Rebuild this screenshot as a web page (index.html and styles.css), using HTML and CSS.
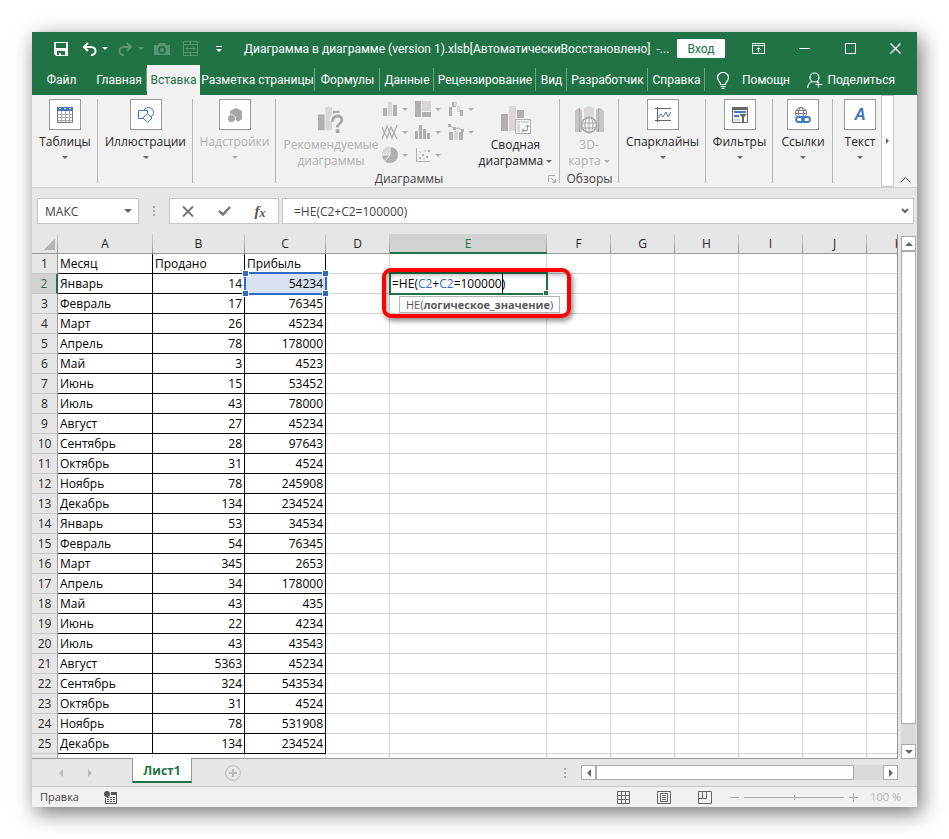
FILE: index.html
```
<!doctype html>
<html lang="ru">
<head>
    <meta charset="utf-8">
    <meta name="viewport" content="width=device-width, initial-scale=1">

    <title>Диаграмма в диаграмме (version 1).xlsb</title>

    <link rel="stylesheet" href="styles.css">
</head>
<body>
    <main class="window">
        <header class="titlebar">
            <div class="quick">
                <button class="icon-button save" aria-label="Сохранить"><svg width="14" height="14" viewBox="0 0 14 14"><path fill="#fff" fill-rule="evenodd" d="M0 0h14v14H2l-2-2zM2 1h10v5H2zM3 9h8v4H7v-2H5v2H3z"/></svg></button>
                <button class="icon-button undo" aria-label="Отменить"><svg width="15" height="14" viewBox="0 0 15 14"><path fill="none" stroke="#fff" stroke-width="2" d="M6 1 2 5l4 4M2 5h7c6 0 6 8 0 8"/></svg></button>
                <button class="icon-button undo-more" aria-label="Список отмены"><i class="caret caret-white"></i></button>
                <button class="icon-button faded redo" aria-label="Вернуть"><svg width="15" height="14" viewBox="0 0 15 14"><path fill="none" stroke="#fff" stroke-width="2" d="m9 1 4 4-4 4m4-4H6c-6 0-6 8 0 8"/></svg></button>
                <button class="icon-button faded redo-more" aria-label="Список возврата"><i class="caret caret-white"></i></button>
                <button class="icon-button faded camera" aria-label="Камера"><svg width="16" height="12" viewBox="0 0 16 12"><path fill="#fff" fill-rule="evenodd" d="M0 2h4l1-2h6l1 2h4v10H0zM8 3a4 4 0 1 0 0 8 4 4 0 0 0 0-8zM8 5a2 2 0 1 1 0 4 2 2 0 0 1 0-4z"/></svg></button>
                <button class="icon-button faded fit" aria-label="Ширина"><svg width="15" height="15" viewBox="0 0 15 15"><path fill="none" stroke="#fff" d="M.5.5h14v14H.5zM.5 3.500h14M.5 11.500h14M7.500.5v3M7.500 11.500v3M3 7.500h9M5 5.500l-2 2 2 2M10 5.500l2 2-2 2"/></svg></button>
                <button class="icon-button customize" aria-label="Настройка панели"><svg width="6" height="6" viewBox="0 0 6 6"><path fill="#fff" d="M0 0h6v1H0zM0 3h6L3 6z"/></svg></button>
            </div>
            <h1 class="title">Диаграмма в диаграмме (version 1).xlsb[АвтоматическиВосстановлено]&nbsp; -...</h1>
            <button class="login">Вход</button>
            <div class="window-buttons">
                <button class="icon-button" aria-label="Параметры ленты"><svg width="13" height="11" viewBox="0 0 13 11"><path fill="none" stroke="#fff" d="M.5.5h12v10H.5zM.5 2.500h12M6.500 9V4.500M4.500 6.500l2-2 2 2"/></svg></button>
                <button class="icon-button" aria-label="Свернуть"><svg width="11" height="11" viewBox="0 0 11 11"><path stroke="#fff" d="M0 5.500h11"/></svg></button>
                <button class="icon-button" aria-label="Развернуть"><svg width="11" height="11" viewBox="0 0 11 11"><path fill="none" stroke="#fff" d="M.5.5h10v10H.5z"/></svg></button>
                <button class="icon-button" aria-label="Закрыть"><svg width="11" height="11" viewBox="0 0 11 11"><path stroke="#fff" stroke-width="1.300" d="m.5.5 10 10m0-10-10 10"/></svg></button>
            </div>
        </header>

        <nav class="tabs">
            <button class="tab tab-file">Файл</button>
            <button class="tab tab-home">Главная</button>
            <button class="tab tab-insert active">Вставка</button>
            <button class="tab tab-layout">Разметка страницы</button>
            <button class="tab tab-formulas">Формулы</button>
            <button class="tab tab-data">Данные</button>
            <button class="tab tab-review">Рецензирование</button>
            <button class="tab tab-view">Вид</button>
            <button class="tab tab-dev">Разработчик</button>
            <button class="tab tab-help">Справка</button>
            <button class="tell-me"><svg width="12" height="17" viewBox="0 0 12 17"><path fill="none" stroke="#fff" stroke-width="1.200" d="M3.500 12.500c0-3-3-3.500-3-7a5.500 5 0 0 1 11 0c0 3.500-3 4-3 7zM3.500 14.500h5M4.500 16.300h3"/></svg>Помощн</button>
            <button class="share"><svg width="16" height="17" viewBox="0 0 16 17"><path fill="none" stroke="#fff" stroke-width="1.200" d="M7.500 1a4.500 4.500 0 1 0 0 9 4.500 4.500 0 0 0 0-9zM.7 16c0-4 2-5.500 4.500-6.500M9.500 9.500l1.500 1.300M11.500 9.500v6M8.500 12.500h7"/></svg>Поделиться</button>
        </nav>

        <section class="ribbon">
            <div class="group group-tables">
                <button class="tool"><span class="tile"><svg width="16" height="16" viewBox="0 0 16 16"><path fill="#4178be" d="M0 0h16v4H0z"/><path fill="#fff" d="M2 1h2v1H2zM7 1h2v1H7zM12 1h2v1h-2z"/><path fill="none" stroke="#aaa" d="M.5 7.500h15M.5 10.500h15M.5 13.500h15M4.500 4v12M8.500 4v12M12.500 4v12"/><path fill="none" stroke="#777" d="M.5 4v11.500h15V4"/></svg></span>Таблицы<i class="caret"></i></button>
            </div>
            <div class="group group-pictures">
                <button class="tool"><span class="tile"><svg width="16" height="16" viewBox="0 0 16 16"><g fill="#fff" stroke="#3e78bd"><circle cx="10.500" cy="5.500" r="5"/><path d="M.5 3.500h9v8h-9z"/><path d="m9.500 6.500 4.500 4.500-4.500 4.500L5 11z"/></g></svg></span>Иллюстрации<i class="caret"></i></button>
            </div>
            <div class="group group-addins">
                <button class="tool" disabled><span class="tile"><svg width="14" height="14" viewBox="0 0 14 14"><path fill="#a6a6a6" d="m8 0 6 3v8l-4 3-2-2V9L4 6 2 7V3z"/><circle cx="3.500" cy="10.500" r="3.500" fill="#a6a6a6"/></svg></span>Надстройки<i class="caret"></i></button>
            </div>
            <div class="group group-charts">
                <div class="group-tools">
                    <button class="big-tool recommended" disabled><svg width="30" height="30" viewBox="0 0 30 30"><path fill="#b1afb1" d="M0 9h7v17H0zM16 5h7v8h-7z"/><path fill="#d9d5d9" d="M8 1h7v25H8z"/><path fill="none" stroke="#f1f1f1" stroke-width="6" d="M15 16c0-7 11-7 11-1 0 4-5 4-5 8"/><path fill="none" stroke="#a6a6a6" stroke-width="3" d="M15.500 17c0-8 10-8 10-2 0 4-5 4-5 8"/><path fill="#a6a6a6" d="M19 25h4v4h-4z"/></svg>Рекомендуемые<br>диаграммы</button>
                    <div class="chart-grid">
                        <button class="mini" disabled aria-label="Гистограмма"><svg width="16" height="16" viewBox="0 0 16 16"><path fill="#b1afb1" d="M1 7h4v8H1zM11 4h4v11h-4z"/><path fill="#d9d5d9" d="M6 1h4v14H6z"/></svg><i class="caret"></i></button>
                        <button class="mini" disabled aria-label="Иерархическая"><svg width="16" height="16" viewBox="0 0 16 16"><path fill="#b1afb1" d="M0 0h6v16H0zM7 11h9v5H7z"/><path fill="#d9d5d9" d="M7 0h9v10H7z"/></svg><i class="caret"></i></button>
                        <button class="mini" disabled aria-label="Каскадная"><svg width="16" height="16" viewBox="0 0 16 16"><path fill="#b1afb1" d="M1 6h3v9H1zM4 1h4v5H4zM12 9h3v6h-3z"/><path fill="#d9d5d9" d="M6 1h3v4H6zM9 5h3v6H9z"/></svg><i class="caret"></i></button>
                        <button class="mini" disabled aria-label="График"><svg width="16" height="16" viewBox="0 0 16 16"><g fill="none" stroke="#b1afb1" stroke-width="1.300"><path d="m0 15 5-13 5 12 5-13"/><path d="m0 3 5 11 4-11 6 12"/></g></svg><i class="caret"></i></button>
                        <button class="mini" disabled aria-label="Статистическая"><svg width="16" height="16" viewBox="0 0 16 16"><path fill="#b1afb1" d="M0 7h3v8H0zM4 1h3v14H4zM8 5h3v10H8zM12 9h3v6h-3z"/></svg><i class="caret"></i></button>
                        <button class="mini" disabled aria-label="Комбинированная"><svg width="16" height="16" viewBox="0 0 16 16"><path fill="#b1afb1" d="M1 8h4v8H1zM11 8h4v8h-4z"/><path fill="#d9d5d9" d="M6 7h4v9H6z"/><path fill="none" stroke="#b1afb1" d="m1 1 6 4 3-1 5 3"/><path fill="#b1afb1" d="M0 0h3v3H0zM5 3h3v3H5zM13 5h3v3h-3z"/></svg><i class="caret"></i></button>
                        <button class="mini" disabled aria-label="Круговая"><svg width="16" height="16" viewBox="0 0 16 16"><circle cx="8" cy="8" r="8" fill="#b1afb1"/><path fill="#d9d5d9" d="M8 8H0a8 8 0 0 1 8-8z"/><path fill="none" stroke="#f1f1f1" d="M0 8h8V0M8 8l-5 6"/></svg><i class="caret"></i></button>
                        <button class="mini" disabled aria-label="Точечная"><svg width="16" height="16" viewBox="0 0 16 16"><path fill="none" stroke="#b1afb1" d="M1.500 1v13.500H15"/><path fill="#b1afb1" d="M4 10h2v2H4zM7 7h2v2H7zM11 9h2v2h-2zM13 3h2v2h-2z"/><path fill="#d9d5d9" d="M4 4h2v2H4zM9 3h2v2H9zM8 11h2v2H8z"/></svg><i class="caret"></i></button>
                    </div>
                    <button class="big-tool pivot"><svg width="30" height="30" viewBox="0 0 30 30"><path fill="#b1afb1" d="M0 9h7v17H0zM16 5h7v8h-7z"/><path fill="#d9d5d9" d="M8 1h7v25H8z"/><path fill="#f5f5f5" stroke="#b1afb1" d="M14.500 14.500h15v14h-15z"/><path fill="#d9d5d9" d="M16 16h3v2h-3zM20 16h8v2h-8zM16 19h3v8h-3z"/><path fill="none" stroke="#999" d="M26.500 20v5.500H21M24.500 22l2-2 2 2M23 23.500l-2 2 2 2"/></svg>Сводная<br>диаграмма <i class="caret"></i></button>
                </div>
                <div class="group-label">Диаграммы</div>
                <button class="launcher" aria-label="Все диаграммы"><svg width="8" height="8" viewBox="0 0 8 8"><path fill="none" stroke="#aaa" d="M.5 7V.5H7M3 3l4 4M7.500 4v3.500H4"/></svg></button>
            </div>
            <div class="group group-tours">
                <div class="group-tools">
                    <button class="big-tool map" disabled><svg width="30" height="30" viewBox="0 0 30 30"><path fill="#c6c4c6" d="m1 6 3-3 4 2v22H1zM22 5l4-2 4 3v21h-8z"/><path fill="#a9a7a9" d="M5 3h1v24H5zM24 3h1v24h-1z"/><path fill="#d9d5d9" d="m10 3 5-2 5 2v24H10z"/><circle cx="15" cy="20" r="7.500" fill="#f3f3f3" stroke="#a9a7a9" stroke-width="1.500"/><path fill="none" stroke="#a9a7a9" d="M8 18h14M8 23h14M15 12v16"/><ellipse cx="15" cy="20" rx="4" ry="8" fill="none" stroke="#a9a7a9"/></svg>3D-<br>карта <i class="caret"></i></button>
                </div>
                <div class="group-label">Обзоры</div>
            </div>
            <div class="group group-sparklines">
                <button class="tool"><span class="tile"><svg width="16" height="16" viewBox="0 0 16 16"><path fill="none" stroke="#666" d="M0 1.500h16M0 13.500h16M2.500 0v15"/><path fill="none" stroke="#3e78bd" d="m3 11 3-4 2 3 3-5 2 5 3-5"/></svg></span>Спарклайны<i class="caret"></i></button>
            </div>
            <div class="group group-filters">
                <button class="tool"><span class="tile"><svg width="16" height="16" viewBox="0 0 16 16"><path fill="#fff" stroke="#666" d="M.5.5h15v15H.5z"/><path fill="#666" d="M0 0h16v3H0z"/><path fill="#3e78bd" d="M2 4h12v2H2zM2 8h5v2H2z"/><path fill="#c9daef" d="M2 12h6v2H2z"/><path fill="#666" d="M7 7h8l-3 3v5h-2v-5z"/></svg></span>Фильтры<i class="caret"></i></button>
            </div>
            <div class="group group-links">
                <button class="tool"><span class="tile"><svg width="16" height="16" viewBox="0 0 16 16"><g fill="none" stroke="#777"><circle cx="6" cy="6" r="5.500"/><ellipse cx="6" cy="6" rx="2.500" ry="5.500"/><path d="M1 3.500h10M0 6.500h12"/></g><path fill="#fff" d="M0 9h16v7H0z"/><g fill="none" stroke="#3e78bd" stroke-width="1.800"><rect x="1" y="10" width="8" height="5" rx="2.500"/><rect x="7" y="10" width="8" height="5" rx="2.500"/></g></svg></span>Ссылки<i class="caret"></i></button>
            </div>
            <div class="group group-text">
                <button class="tool"><span class="tile letter">A</span>Текст<i class="caret"></i></button>
            </div>
            <button class="ribbon-next" aria-label="Далее"><i class="arrow-right"></i></button>
            <button class="ribbon-collapse" aria-label="Свернуть ленту"><svg width="11" height="6" viewBox="0 0 11 6"><path fill="none" stroke="#444" d="m.5 5.500 5-5 5 5"/></svg></button>
        </section>

        <section class="formula-bar">
            <div class="name-box">
                <input class="name-input" type="text" value="МАКС" aria-label="Имя ячейки">
                <button class="name-more" aria-label="Список имён"><i class="caret caret-large"></i></button>
            </div>
            <span class="dots"></span>
            <div class="formula-buttons">
                <button class="icon-button" aria-label="Отмена"><svg width="12" height="11" viewBox="0 0 12 11"><path stroke="#777" stroke-width="2" d="m1 .5 10 10m0-10-10 10"/></svg></button>
                <button class="icon-button" aria-label="Ввод"><svg width="13" height="10" viewBox="0 0 13 10"><path fill="none" stroke="#777" stroke-width="2.500" d="m1 5 4 3.500L12 1"/></svg></button>
                <button class="icon-button fx" aria-label="Вставить функцию">f<span class="fx-x">x</span></button>
            </div>
            <div class="formula-field">
                <input class="formula-input" type="text" value="=НЕ(C2+C2=100000)" aria-label="Строка формул">
                <button class="icon-button expand" aria-label="Развернуть строку формул"><svg width="8" height="6" viewBox="0 0 8 6"><path fill="none" stroke="#666" stroke-width="2" d="m1 1 3 3 3-3"/></svg></button>
            </div>
        </section>

        <section class="workspace">
            <div class="sheet">
                <table class="grid">
                    <colgroup>
                        <col class="col-row"><col class="col-a"><col class="col-b"><col class="col-c"><col class="col-std"><col class="col-e"><col class="col-std"><col class="col-std"><col class="col-std"><col class="col-std"><col class="col-std"><col>
                    </colgroup>
                    <thead>
                        <tr><th class="corner"></th><th>A</th><th>B</th><th>C</th><th>D</th><th class="current">E</th><th>F</th><th>G</th><th>H</th><th>I</th><th>J</th><th>K</th></tr>
                    </thead>
                    <tbody>
                        <tr><th>1</th><td class="data">Месяц</td><td class="data">Продано</td><td class="data">Прибыль</td><td></td><td></td><td></td><td></td><td></td><td></td><td></td><td></td></tr>
                        <tr>
                            <th class="current">2</th><td class="data">Январь</td><td class="data num">14</td>
                            <td class="data num referenced">54234<span class="reference"><i class="handle top left"></i><i class="handle top right"></i><i class="handle bottom left"></i><i class="handle bottom right"></i></span></td>
                            <td></td>
                            <td class="editing">
                                <span class="editor">=НЕ(<span class="ref">C2</span>+<span class="ref">C2</span>=100000<span class="cursor"></span>)</span>
                                <span class="hint">НЕ(<b>логическое_значение</b>)</span>
                                <span class="marker"></span>
                            </td>
                            <td></td><td></td><td></td><td></td><td></td><td></td>
                        </tr>
                        <tr><th>3</th><td class="data">Февраль</td><td class="data num">17</td><td class="data num">76345</td><td></td><td></td><td></td><td></td><td></td><td></td><td></td><td></td></tr>
                        <tr><th>4</th><td class="data">Март</td><td class="data num">26</td><td class="data num">45234</td><td></td><td></td><td></td><td></td><td></td><td></td><td></td><td></td></tr>
                        <tr><th>5</th><td class="data">Апрель</td><td class="data num">78</td><td class="data num">178000</td><td></td><td></td><td></td><td></td><td></td><td></td><td></td><td></td></tr>
                        <tr><th>6</th><td class="data">Май</td><td class="data num">3</td><td class="data num">4523</td><td></td><td></td><td></td><td></td><td></td><td></td><td></td><td></td></tr>
                        <tr><th>7</th><td class="data">Июнь</td><td class="data num">15</td><td class="data num">53452</td><td></td><td></td><td></td><td></td><td></td><td></td><td></td><td></td></tr>
                        <tr><th>8</th><td class="data">Июль</td><td class="data num">43</td><td class="data num">78000</td><td></td><td></td><td></td><td></td><td></td><td></td><td></td><td></td></tr>
                        <tr><th>9</th><td class="data">Август</td><td class="data num">27</td><td class="data num">45234</td><td></td><td></td><td></td><td></td><td></td><td></td><td></td><td></td></tr>
                        <tr><th>10</th><td class="data">Сентябрь</td><td class="data num">28</td><td class="data num">97643</td><td></td><td></td><td></td><td></td><td></td><td></td><td></td><td></td></tr>
                        <tr><th>11</th><td class="data">Октябрь</td><td class="data num">31</td><td class="data num">4524</td><td></td><td></td><td></td><td></td><td></td><td></td><td></td><td></td></tr>
                        <tr><th>12</th><td class="data">Ноябрь</td><td class="data num">78</td><td class="data num">245908</td><td></td><td></td><td></td><td></td><td></td><td></td><td></td><td></td></tr>
                        <tr><th>13</th><td class="data">Декабрь</td><td class="data num">134</td><td class="data num">234524</td><td></td><td></td><td></td><td></td><td></td><td></td><td></td><td></td></tr>
                        <tr><th>14</th><td class="data">Январь</td><td class="data num">53</td><td class="data num">34534</td><td></td><td></td><td></td><td></td><td></td><td></td><td></td><td></td></tr>
                        <tr><th>15</th><td class="data">Февраль</td><td class="data num">54</td><td class="data num">76345</td><td></td><td></td><td></td><td></td><td></td><td></td><td></td><td></td></tr>
                        <tr><th>16</th><td class="data">Март</td><td class="data num">345</td><td class="data num">2653</td><td></td><td></td><td></td><td></td><td></td><td></td><td></td><td></td></tr>
                        <tr><th>17</th><td class="data">Апрель</td><td class="data num">34</td><td class="data num">178000</td><td></td><td></td><td></td><td></td><td></td><td></td><td></td><td></td></tr>
                        <tr><th>18</th><td class="data">Май</td><td class="data num">43</td><td class="data num">435</td><td></td><td></td><td></td><td></td><td></td><td></td><td></td><td></td></tr>
                        <tr><th>19</th><td class="data">Июнь</td><td class="data num">22</td><td class="data num">4234</td><td></td><td></td><td></td><td></td><td></td><td></td><td></td><td></td></tr>
                        <tr><th>20</th><td class="data">Июль</td><td class="data num">43</td><td class="data num">43543</td><td></td><td></td><td></td><td></td><td></td><td></td><td></td><td></td></tr>
                        <tr><th>21</th><td class="data">Август</td><td class="data num">5363</td><td class="data num">45234</td><td></td><td></td><td></td><td></td><td></td><td></td><td></td><td></td></tr>
                        <tr><th>22</th><td class="data">Сентябрь</td><td class="data num">324</td><td class="data num">543534</td><td></td><td></td><td></td><td></td><td></td><td></td><td></td><td></td></tr>
                        <tr><th>23</th><td class="data">Октябрь</td><td class="data num">31</td><td class="data num">4524</td><td></td><td></td><td></td><td></td><td></td><td></td><td></td><td></td></tr>
                        <tr><th>24</th><td class="data">Ноябрь</td><td class="data num">78</td><td class="data num">531908</td><td></td><td></td><td></td><td></td><td></td><td></td><td></td><td></td></tr>
                        <tr><th>25</th><td class="data">Декабрь</td><td class="data num">134</td><td class="data num">234524</td><td></td><td></td><td></td><td></td><td></td><td></td><td></td><td></td></tr>
                        <tr class="partial"><th></th><td></td><td></td><td></td><td></td><td></td><td></td><td></td><td></td><td></td><td></td><td></td></tr>
                    </tbody>
                </table>
            </div>
            <div class="scroll-v">
                <button class="scroll-button" aria-label="Вверх"><i class="arrow-up"></i></button>
                <div class="thumb"></div>
                <button class="scroll-button" aria-label="Вниз"><i class="caret caret-large"></i></button>
            </div>
        </section>

        <section class="sheet-bar">
            <div class="sheet-nav">
                <button class="icon-button" aria-label="Предыдущий лист"><i class="arrow-left pale"></i></button>
                <button class="icon-button" aria-label="Следующий лист"><i class="arrow-right pale"></i></button>
            </div>
            <button class="sheet-tab">Лист1</button>
            <button class="icon-button add-sheet" aria-label="Новый лист"><svg width="16" height="16" viewBox="0 0 16 16"><circle cx="8" cy="8" r="7.400" fill="none" stroke="#bbb"/><path stroke="#bbb" stroke-width="2" d="M4 8h8M8 4v8"/></svg></button>
            <span class="dots"></span>
            <div class="scroll-h">
                <button class="scroll-button" aria-label="Влево"><i class="arrow-left"></i></button>
                <div class="thumb"></div>
                <button class="scroll-button" aria-label="Вправо"><i class="arrow-right"></i></button>
            </div>
        </section>

        <footer class="status">
            <span class="mode">Правка</span>
            <button class="icon-button" aria-label="Запись макроса"><svg width="13" height="13" viewBox="0 0 13 13"><circle cx="3" cy="3" r="3" fill="#555"/><path fill="#555" d="M7 1h6v3H7z"/><path fill="none" stroke="#555" d="M1.500 7v5.500h11V4"/><path fill="#555" d="M3 6h2v1H3zM6 6h2v1H6zM9 6h2v1H9zM3 8h2v1H3zM6 8h2v1H6zM9 8h2v1H9zM3 10h2v1H3zM6 10h2v1H6zM9 10h2v1H9z"/></svg></button>
            <div class="views">
                <button class="icon-button" aria-label="Обычный"><svg width="13" height="13" viewBox="0 0 13 13"><path fill="none" stroke="#666" d="M.5.5h12v12H.5zM4.500 0v13M8.500 0v13M0 4.500h13M0 8.500h13"/></svg></button>
                <button class="icon-button" aria-label="Разметка страницы"><svg width="14" height="13" viewBox="0 0 14 13"><path fill="none" stroke="#666" d="M.5.5h13v12H.5zM3.500 2.500h7v8h-7zM5 4.500h4M5 6.500h4M5 8.500h4"/></svg></button>
                <button class="icon-button" aria-label="Страничный режим"><svg width="14" height="13" viewBox="0 0 14 13"><path fill="none" stroke="#666" d="M.5.5h13v12H.5zM4.500 0v7.500M.5 7.500h8V0"/></svg></button>
            </div>
            <div class="zoom">
                <button class="icon-button" aria-label="Уменьшить"><svg width="9" height="9" viewBox="0 0 9 9"><path stroke="#aaa" d="M0 4.500h9"/></svg></button>
                <input class="zoom-range" type="range" min="10" max="190" value="100" aria-label="Масштаб">
                <button class="icon-button" aria-label="Увеличить"><svg width="9" height="9" viewBox="0 0 9 9"><path stroke="#aaa" d="M0 4.500h9M4.500 0v9"/></svg></button>
                <span class="zoom-value">100 %</span>
            </div>
        </footer>
    </main>
</body>
</html>
```
FILE: styles.css
```
*,
*::before,
*::after {
    box-sizing: border-box;
}

body {
    background-color: white;
    color: #262626;
    font-family: "Open Sans", "Noto Sans", sans-serif;
    font-size: 12px;
    line-height: 16px;
    margin: 0;
    padding: 32px;
}

button,
input {
    background: none;
    border: 0;
    color: inherit;
    font: inherit;
    margin: 0;
    padding: 0;
}

svg {
    display: block;
}

.window {
    background-color: #e6e6e6;
    box-shadow: 4px 6px 20px rgba(0, 0, 0, 0.55);
}

.icon-button {
    align-items: center;
    display: flex;
    flex: none;
    justify-content: center;
}

.faded {
    opacity: 0.25;
}

/*
 * Arrows
 */

.caret {
    border: 3px solid transparent;
    border-bottom: 0;
    border-top-color: #666;
    display: inline-block;
    height: 3px;
    width: 6px;
}

.caret-white {
    border-top-color: white;
}

.caret-large {
    border-width: 4px;
    border-bottom: 0;
    height: 4px;
    width: 8px;
}

.arrow-up {
    border: 4px solid transparent;
    border-bottom-color: #666;
    border-top: 0;
}

.arrow-left {
    border: 4px solid transparent;
    border-left: 0;
    border-right-color: #666;
}

.arrow-right {
    border: 4px solid transparent;
    border-left-color: #666;
    border-right: 0;
}

.arrow-left.pale {
    border-right-color: #bbb;
}

.arrow-right.pale {
    border-left-color: #bbb;
}

/*
 * Title bar and tabs
 */

.titlebar,
.tabs {
    background-color: #217346;
    color: white;
    display: flex;
    font-family: Roboto, "Open Sans", sans-serif;
    white-space: nowrap;
}

.titlebar {
    align-items: center;
    height: 33px;
}

.quick {
    align-items: center;
    display: flex;
    flex: none;
    padding-left: 22px;
    width: 212px;
}

.save {
    margin-right: 14px;
}

.undo,
.redo {
    margin-right: 5px;
}

.undo-more {
    margin-right: 10px;
}

.redo-more {
    margin-right: 10px;
}

.camera {
    margin-right: 13px;
}

.customize {
    margin-left: 18px;
}

.title {
    flex: 1;
    font-size: 12px;
    font-weight: normal;
    margin: 0;
}

.login {
    background-color: white;
    border-radius: 1px;
    color: #217346;
    height: 19px;
    width: 48px;
}

.window-buttons {
    display: flex;
    margin-left: 9px;
}

.window-buttons .icon-button {
    height: 28px;
    padding-left: 2px;
    width: 46px;
}

.window-buttons .icon-button:last-child {
    width: 45px;
}

.tabs {
    height: 30px;
}

.tab {
    background: linear-gradient(#6fa587, #6fa587) right 3px / 1px 23px no-repeat;
    flex: none;
    text-align: center;
}

.tab-file {
    background: none;
    width: 59px;
}

.tab-home {
    width: 56px;
}

.tab-insert {
    width: 53px;
}

.tab-layout {
    width: 115px;
}

.tab-formulas {
    width: 65px;
}

.tab-data {
    width: 54px;
}

.tab-review {
    width: 102px;
}

.tab-view {
    width: 31px;
}

.tab-dev {
    width: 81px;
}

.tab-help {
    width: 57px;
}

.tab.active {
    background: #f1f1f1;
    color: #217346;
}

.tell-me,
.share {
    align-items: center;
    display: flex;
    flex: none;
}

.tell-me {
    gap: 13px;
    margin-left: 12px;
}

.share {
    gap: 4px;
    margin-left: auto;
    margin-right: 22px;
}

/*
 * Ribbon
 */

.ribbon {
    background-color: #f1f1f1;
    border-bottom: 1px solid #d2d2d2;
    display: flex;
    height: 93px;
}

.group {
    background: linear-gradient(#b5b5b5, #b5b5b5) right 4px / 1px 84px no-repeat;
    flex: none;
    padding-top: 4px;
    position: relative;
    white-space: nowrap;
}

.group-tables {
    width: 66px;
}

.group-pictures {
    width: 95px;
}

.group-addins {
    width: 83px;
}

.group-charts {
    width: 284px;
}

.group-tours {
    width: 59px;
}

.group-sparklines {
    width: 87px;
}

.group-filters {
    width: 67px;
}

.group-links {
    width: 60px;
}

.group-text {
    background: none;
    flex: 1 0 48px;
    padding-left: 6px;
}

.tool {
    align-items: center;
    display: flex;
    flex-direction: column;
    width: 100%;
}

.tool:disabled,
.big-tool:disabled {
    color: #b1b1b1;
}

:disabled .caret {
    border-top-color: #b1b1b1;
}

.tile {
    align-items: center;
    background-color: white;
    border: 1px solid #999;
    display: flex;
    height: 31px;
    justify-content: center;
    margin-bottom: 4px;
    width: 32px;
}

.tool .caret {
    margin-top: 6px;
}

.letter {
    color: #3e78bd;
    font-family: "Liberation Sans", sans-serif;
    font-size: 16px;
    font-style: italic;
    font-weight: bold;
}

.group-tools {
    display: flex;
    height: 72px;
}

.group-charts .group-tools {
    padding-left: 6px;
}

.big-tool {
    flex: none;
    padding-top: 4px;
}

.big-tool svg {
    margin: 0 auto 2px;
}

.big-tool .caret {
    vertical-align: 2px;
}

.recommended {
    width: 98px;
}

.recommended svg {
    padding-left: 2px;
}

.pivot {
    width: 77px;
}

.map {
    width: 58px;
}

.chart-grid {
    align-content: start;
    display: grid;
    flex: none;
    grid-auto-rows: 23px;
    grid-template-columns: 33px 33px 29px;
    padding-left: 2px;
    width: 97px;
}

.mini {
    align-items: center;
    display: flex;
    gap: 4px;
    height: 20px;
}

.group-label {
    color: #444;
    text-align: center;
}

.group-charts .group-label {
    padding-right: 18px;
}

.launcher {
    bottom: 4px;
    position: absolute;
    right: 4px;
}

.ribbon-next {
    align-items: center;
    background-color: white;
    border: 1px solid #c6c6c6;
    display: flex;
    flex: none;
    justify-content: center;
    width: 13px;
}

.ribbon-next .arrow-right {
    border-width: 3px;
    border-right: 0;
}

.ribbon-collapse {
    align-self: flex-end;
    flex: none;
    padding: 4px 6px;
    width: 23px;
}

/*
 * Formula bar
 */

.formula-bar {
    color: #444;
    display: flex;
    height: 46px;
    padding: 10px 3px 10px 5px;
}

.name-box,
.formula-buttons,
.formula-field {
    background-color: white;
    border: 1px solid #c6c6c6;
    display: flex;
}

.name-box {
    flex: none;
    width: 102px;
}

.name-input {
    min-width: 0;
    padding-left: 7px;
    padding-top: 1px;
    width: 80px;
}

.name-more {
    align-items: center;
    display: flex;
    flex: 1;
    justify-content: center;
}

.dots {
    align-self: center;
    background: linear-gradient(#aaa 2px, transparent 2px) 0 0 / 2px 4px;
    flex: none;
    height: 10px;
    width: 2px;
}

.formula-bar .dots {
    margin: 0 14px;
}

.formula-buttons {
    flex: none;
    width: 110px;
}

.formula-buttons .icon-button {
    flex: 1;
}

.fx {
    color: #555;
    font-family: "Liberation Serif", serif;
    font-size: 15px;
    font-style: italic;
    font-weight: bold;
}

.fx-x {
    font-size: 12px;
    padding-top: 3px;
}

.formula-field {
    flex: 1;
    margin-left: 3px;
}

.formula-input {
    flex: 1;
    min-width: 0;
    padding-left: 11px;
    padding-top: 1px;
}

.expand {
    width: 16px;
}

/*
 * Sheet
 */

.workspace {
    display: flex;
}

.sheet {
    background-color: white;
    border-bottom: 1px solid #999;
    border-right: 1px solid #999;
    flex: 1;
    min-width: 0;
    overflow: hidden;
}

.grid {
    border-collapse: separate;
    border-spacing: 0;
    color: black;
    min-width: 899px;
    table-layout: fixed;
    width: 100%;
}

.col-row {
    width: 26px;
}

.col-a {
    width: 95px;
}

.col-b {
    width: 92px;
}

.col-c {
    width: 81px;
}

.col-std {
    width: 64px;
}

.col-e {
    width: 157px;
}

.grid th,
.grid td {
    height: 20px;
    line-height: 18px;
    padding: 1px 2px 0;
    white-space: nowrap;
}

.grid td {
    border-bottom: 1px solid #d4d4d4;
    border-right: 1px solid #d4d4d4;
}

.grid th {
    background-color: #e6e6e6;
    border-bottom: 1px solid #c6c6c6;
    border-right: 1px solid #999;
    color: #262626;
    font-weight: normal;
    padding: 1px 0 0;
}

.grid thead th {
    background-image: linear-gradient(#d0d0d0, #999);
    background-position: right;
    background-repeat: no-repeat;
    background-size: 1px 100%;
    border-bottom-color: #999;
    border-right: 0;
    padding-right: 1px;
}

.grid thead .corner {
    background-image: linear-gradient(135deg, transparent 50%, #b5b5b5 50%), linear-gradient(#d0d0d0, #999);
    background-position: right 3px bottom 3px, right;
    background-size: 12px 12px, 1px 100%;
}

.grid .current {
    background-color: #d2d2d2;
    color: #217346;
}

.grid thead .current {
    border-bottom: 2px solid #217346;
    line-height: 17px;
}

.grid tbody .current {
    border-right: 2px solid #217346;
}

.grid .data {
    border-color: black;
}

.grid .num {
    text-align: right;
}

.grid .partial th,
.grid .partial td {
    border-bottom: 0;
    height: 4px;
    line-height: 3px;
}

.grid .referenced {
    background-color: #d9e2f3;
    position: relative;
}

.reference {
    border: 2px solid #2f6bc8;
    bottom: -2px;
    left: -1px;
    position: absolute;
    right: -2px;
    top: -2px;
    z-index: 1;
}

.handle {
    background-color: #2f6bc8;
    border: 1px solid white;
    height: 7px;
    position: absolute;
    width: 7px;
}

.handle.top {
    top: -4px;
}

.handle.bottom {
    bottom: -4px;
}

.handle.left {
    left: -4px;
}

.handle.right {
    right: -4px;
}

.grid .editing {
    position: relative;
}

.editor {
    background-color: white;
    border: 2px solid #217346;
    bottom: -2px;
    left: -1px;
    line-height: 18px;
    padding-left: 1px;
    padding-top: 1px;
    position: absolute;
    right: -2px;
    top: -2px;
    z-index: 1;
}

.editor::after {
    background-color: #217346;
    border: 1px solid white;
    bottom: -3px;
    content: "";
    height: 6px;
    position: absolute;
    right: -3px;
    width: 6px;
}

.ref {
    color: #2f6bc8;
}

.cursor {
    border-left: 1px solid black;
    margin-right: -1px;
    padding: 2px 0;
}

.hint {
    background-color: white;
    border: 1px solid #b5b5b5;
    color: #595959;
    font-size: 11px;
    left: 9px;
    line-height: 15px;
    padding: 0 6px;
    position: absolute;
    top: 22px;
    z-index: 1;
}

/* red frame around the edited cell and its hint */
.marker {
    border: 4px solid #fe0000;
    border-radius: 9px;
    box-shadow: 2px 3px 5px rgba(0, 0, 0, 0.45), inset 2px 3px 5px rgba(0, 0, 0, 0.3);
    height: 50px;
    left: -8px;
    position: absolute;
    top: -6px;
    width: 189px;
    z-index: 2;
}

/*
 * Scroll bars
 */

.scroll-v {
    display: flex;
    flex: none;
    flex-direction: column;
    padding: 2px 1px 0 3px;
    width: 19px;
}

.scroll-v,
.scroll-h {
    background: linear-gradient(#d9d9d9, #d9d9d9) content-box;
}

.scroll-button {
    align-items: center;
    background-color: white;
    border: 1px solid #ababab;
    display: flex;
    flex: none;
    height: 15px;
    justify-content: center;
    width: 15px;
}

.thumb {
    background-color: white;
    border: 1px solid #ababab;
    flex: 1;
}

.scroll-v .thumb {
    margin-bottom: 20px;
}

.scroll-h .thumb {
    margin-right: 29px;
}

.scroll-h {
    display: flex;
    flex: none;
    height: 15px;
    margin-right: 19px;
    width: 317px;
}

/*
 * Sheet tabs
 */

.sheet-bar {
    align-items: center;
    border-bottom: 1px solid #c6c6c6;
    display: flex;
    height: 28px;
}

.sheet-nav {
    display: flex;
    flex: none;
    gap: 25px;
    padding-left: 27px;
    width: 100px;
}

.sheet-tab {
    align-self: flex-start;
    background-color: white;
    border: 1px solid #999;
    border-bottom: 2px solid #217346;
    border-top: 0;
    color: #217346;
    font-weight: bold;
    height: 25px;
    margin-top: -1px;
    padding-top: 2px;
    width: 60px;
}

.add-sheet {
    margin-left: 33px;
}

.sheet-bar .dots {
    margin-left: auto;
    margin-right: 15px;
}

/*
 * Status bar
 */

.status {
    align-items: center;
    background-color: #f1f1f1;
    color: #444;
    display: flex;
    height: 20px;
    padding: 0 16px 0 8px;
}

.mode {
    font-size: 11px;
    width: 64px;
}

.views {
    display: flex;
    gap: 27px;
    margin-left: auto;
    margin-right: 18px;
}

.zoom {
    align-items: center;
    display: flex;
    gap: 5px;
}

.zoom-range {
    appearance: none;
    background: linear-gradient(#aaa, #aaa) center / 100% 1px no-repeat;
    height: 11px;
    width: 100px;
}

.zoom-range::-webkit-slider-thumb {
    appearance: none;
    background-color: #aaa;
    height: 5px;
    width: 1px;
}

.zoom-value {
    color: #b1b1b1;
    font-size: 11px;
    margin-left: 7px;
}
```
